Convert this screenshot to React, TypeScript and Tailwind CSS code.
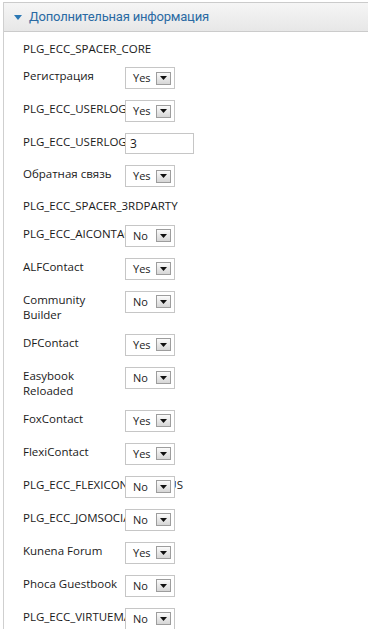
const rows: { label: string; kind: 'spacer' | 'select' | 'input'; value?: string }[] = [
  { label: 'PLG_ECC_SPACER_CORE', kind: 'spacer' },
  { label: 'Регистрация', kind: 'select', value: 'Yes' },
  { label: 'PLG_ECC_USERLOGIN', kind: 'select', value: 'Yes' },
  { label: 'PLG_ECC_USERLOGIN', kind: 'input', value: '3' },
  { label: 'Обратная связь', kind: 'select', value: 'Yes' },
  { label: 'PLG_ECC_SPACER_3RDPARTY', kind: 'spacer' },
  { label: 'PLG_ECC_AICONTACT', kind: 'select', value: 'No' },
  { label: 'ALFContact', kind: 'select', value: 'Yes' },
  { label: 'Community Builder', kind: 'select', value: 'No' },
  { label: 'DFContact', kind: 'select', value: 'Yes' },
  { label: 'Easybook Reloaded', kind: 'select', value: 'No' },
  { label: 'FoxContact', kind: 'select', value: 'Yes' },
  { label: 'FlexiContact', kind: 'select', value: 'Yes' },
  { label: 'PLG_ECC_FLEXICONTACTPLUS', kind: 'select', value: 'No' },
  { label: 'PLG_ECC_JOMSOCIAL', kind: 'select', value: 'No' },
  { label: 'Kunena Forum', kind: 'select', value: 'Yes' },
  { label: 'Phoca Guestbook', kind: 'select', value: 'No' },
  { label: 'PLG_ECC_VIRTUEMART', kind: 'select', value: 'No' },
]

function FakeSelect({ value }: { value: string }) {
  return (
    <div className="relative z-10 flex h-[22px] w-[50px] items-center border border-[#c6c6c6] bg-white pl-[7px] pr-[3px] text-[11px] text-[#222]">
      <span>{value}</span>
      <span className="ml-auto flex h-[13px] w-[15px] items-center justify-center border border-[#9d9d9d] bg-gradient-to-b from-[#fbfbfb] to-[#d6d6d6]">
        <svg width="7" height="4" viewBox="0 0 7 4">
          <path d="M0 0h7L3.5 4z" fill="#111" />
        </svg>
      </span>
    </div>
  )
}

export default function App() {
  return (
    <div className="min-h-screen bg-white pt-[2px] pl-[3px] pr-[1px]" style={{ fontFamily: '"Open Sans", "Noto Sans", sans-serif' }}>
      <div className="min-h-[627px] border-l border-[#cfcfcf]">
        <div className="flex h-[30px] items-center border-y border-[#cbcbcb] bg-gradient-to-b from-[#f5f5f5] to-[#e7e7e7] pl-[10px]">
          <svg width="8" height="5" viewBox="0 0 8 5" className="mr-[7px]">
            <path d="M0 0h8L4 5z" fill="#2b78b4" />
          </svg>
          <span className="text-[13px] tracking-[-0.2px] text-[#2a6aa3]" style={{ fontFamily: 'Roboto, "Liberation Sans", Arial, sans-serif' }}>
            Дополнительная информация
          </span>
        </div>
        <div className="flex flex-col gap-[11px] pl-[19px] pt-[8.5px] text-[11.5px] leading-[15.5px] text-[#1a1a1a]">
          {rows.map((r, i) =>
            r.kind === 'spacer' ? (
              <div key={i}>{r.label}</div>
            ) : (
              <div key={i} className="flex items-start">
                <div className="w-[102px] shrink-0 pt-[1px]">{r.label}</div>
                {r.kind === 'select' ? (
                  <FakeSelect value={r.value!} />
                ) : (
                  <div className="relative z-10 flex h-[21px] w-[69px] items-center border border-[#c6c6c6] bg-white pl-[4px] text-[12px]">
                    {r.value}
                  </div>
                )}
              </div>
            )
          )}
        </div>
      </div>
    </div>
  )
}
